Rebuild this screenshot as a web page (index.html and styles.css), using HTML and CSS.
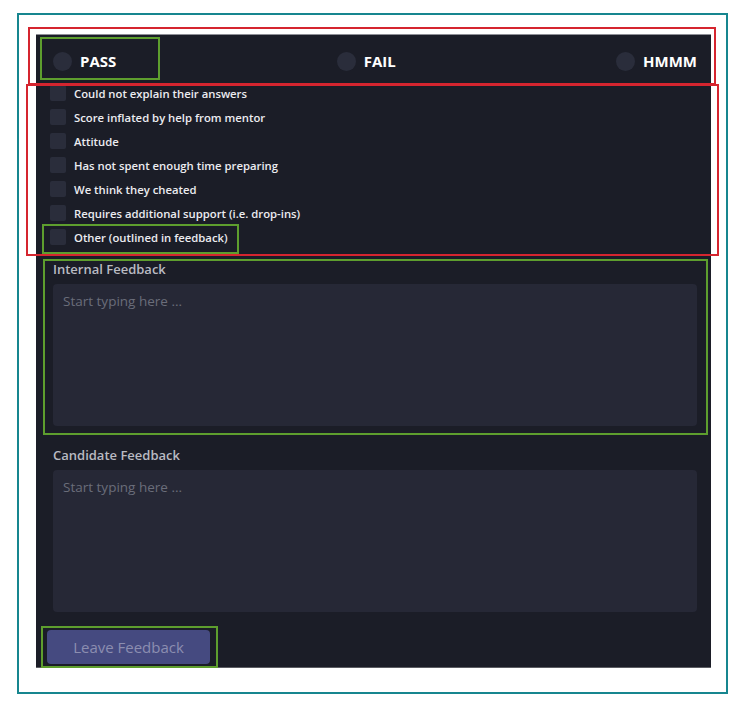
FILE: index.html
```html
<!DOCTYPE html>
<html lang="en">
<head>
<meta charset="utf-8">
<title>Leave Feedback</title>
<link rel="stylesheet" href="styles.css">
</head>
<body>
<div class="frame">
  <form class="panel">
    <div class="verdicts">
      <label class="verdict"><span class="radio"></span><span>PASS</span></label>
      <label class="verdict"><span class="radio"></span><span>FAIL</span></label>
      <label class="verdict"><span class="radio"></span><span>HMMM</span></label>
    </div>
    <ul class="reasons">
      <li class="reason"><span class="box"></span>Could not explain their answers</li>
      <li class="reason"><span class="box"></span>Score inflated by help from mentor</li>
      <li class="reason"><span class="box"></span>Attitude</li>
      <li class="reason"><span class="box"></span>Has not spent enough time preparing</li>
      <li class="reason"><span class="box"></span>We think they cheated</li>
      <li class="reason"><span class="box"></span>Requires additional support (i.e. drop-ins)</li>
      <li class="reason"><span class="box"></span>Other (outlined in feedback)</li>
    </ul>
    <div class="field field-internal">
      <div class="field-label">Internal Feedback</div>
      <textarea class="field-input" placeholder="Start typing here ..."></textarea>
    </div>
    <div class="field field-candidate">
      <div class="field-label">Candidate Feedback</div>
      <textarea class="field-input" placeholder="Start typing here ..."></textarea>
    </div>
    <div class="actions">
      <button type="button" class="submit">Leave Feedback</button>
    </div>
  </form>
</div>
<div class="annotations">
  <div class="mark red mark-verdicts"></div>
  <div class="mark red mark-reasons"></div>
  <div class="mark green mark-pass"></div>
  <div class="mark green mark-other"></div>
  <div class="mark green mark-internal"></div>
  <div class="mark green mark-button"></div>
</div>
</body>
</html>
```

FILE: styles.css
```css
* { box-sizing: border-box; }

html, body {
  margin: 0;
  padding: 0;
  background: #ffffff;
}

body {
  position: relative;
  width: 742px;
  height: 712px;
  font-family: "Open Sans", "Noto Sans", sans-serif;
}

.frame {
  position: absolute;
  left: 17px;
  top: 13px;
  width: 711px;
  height: 681px;
  border: 2px solid #17868f;
  padding: 19px 0 0 17px;
}

.panel {
  width: 675px;
  height: 634px;
  background: #1b1d27;
  border-top: 1px solid #8e8f96;
  border-bottom: 1px solid #5c5d63;
  margin: 0;
}

.verdicts {
  display: flex;
  justify-content: space-between;
  align-items: center;
  height: 46px;
  padding: 6px 14px 0 17px;
}

.verdict {
  display: flex;
  align-items: center;
  gap: 8px;
  color: #ffffff;
  font-weight: 700;
  font-size: 15px;
}

.radio {
  width: 19px;
  height: 19px;
  border-radius: 50%;
  background: #2a2d3b;
}

.reasons {
  list-style: none;
  margin: 0;
  padding: 0 0 0 14px;
}

.reason {
  display: flex;
  align-items: center;
  gap: 8px;
  height: 24px;
  color: #ececf0;
  font-size: 11.3px;
  font-weight: 600;
}

.box {
  width: 16px;
  height: 16px;
  border-radius: 2px;
  background: #2a2d3b;
}

.field {
  padding: 0 14px 0 17px;
}

.field-internal { margin-top: 11px; }
.field-candidate { margin-top: 20px; }

.field-label {
  color: #b9bac2;
  font-size: 13px;
  font-weight: 600;
  line-height: 18px;
  margin-bottom: 6px;
}

.field-input {
  display: block;
  width: 644px;
  height: 142px;
  border: none;
  border-radius: 4px;
  background: #262836;
  resize: none;
  padding: 9px 10px;
  font-family: "Open Sans", "Noto Sans", sans-serif;
  font-size: 13.5px;
  line-height: 17px;
  color: #d0d1d8;
  outline: none;
}

.field-input::placeholder {
  color: #6a6d7a;
}

.actions {
  padding: 18px 0 0 11px;
}

.submit {
  width: 163px;
  height: 34px;
  border: none;
  border-radius: 4px;
  background: #454a80;
  color: #8c8eb0;
  font-family: "Open Sans", "Noto Sans", sans-serif;
  font-size: 15px;
  padding: 0;
}

.annotations {
  position: absolute;
  inset: 0;
  pointer-events: none;
}

.mark {
  position: absolute;
  border: 2px solid;
}

.red { border-color: #d5252f; }
.green { border-color: #5e9e2e; }

.mark-verdicts { left: 28px; top: 27px; width: 688px; height: 58px; }
.mark-reasons { left: 26px; top: 84px; width: 693px; height: 172px; }
.mark-pass { left: 40px; top: 37px; width: 120px; height: 43px; }
.mark-other { left: 42px; top: 224px; width: 197px; height: 30px; }
.mark-internal { left: 43px; top: 259px; width: 665px; height: 176px; }
.mark-button { left: 41px; top: 626px; width: 177px; height: 42px; }
```
